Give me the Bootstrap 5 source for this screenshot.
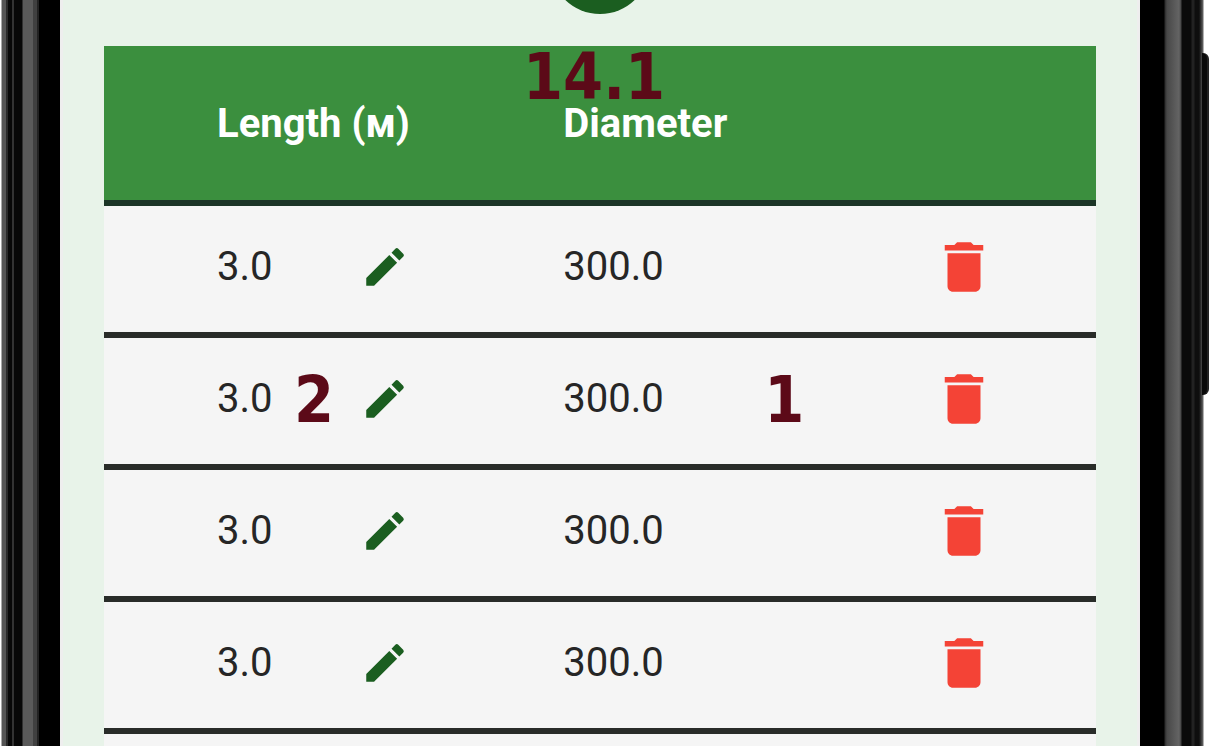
<!DOCTYPE html>
<html lang="en">
<head>
<meta charset="utf-8">
<meta name="viewport" content="width=device-width, initial-scale=1">
<title>Length and diameter</title>
<link href="https://cdn.jsdelivr.net/npm/bootstrap@5.3.0/dist/css/bootstrap.min.css" rel="stylesheet">
<style>
  body { font-family: Roboto, sans-serif; background: #fff; }
  /* phone frame */
  .bezel-left {
    width: 60px;
    background: linear-gradient(90deg, #fff 1px, #aaa 1px 2px, #555 2px 6px, #2a2a2a 6px 8px, #080808 8px 12px, #333 12px 14px, #080808 14px 22px, #5a5a5a 23px 33px, #404040 33px 37px, #222 37px 39px, #000 39px);
  }
  .bezel-right {
    width: 71px;
    background: linear-gradient(90deg, #000 24px, #2c2c2c 25px, #484848 27px, #646464 39px, #444 41px, #0a0a0a 42px 51px, #222 52px 54px, #0e0e0e 55px 59px, #333 61px, #666 63px, #fff 64px);
  }
  .power-key { top: 53px; right: 2px; width: 7px; height: 342px; background: #0a0a0a; border-right: 2px solid #222; border-radius: 0 6px 6px 0; }
  .screen { background: #e8f3e9; border: solid #eee; border-width: 0 3px; padding: 0 41px; }
  .topbar { height: 46px; padding-bottom: 32px; }
  .fab { width: 100px; height: 100px; background: #1b5e20; border: 0; }
  /* measurements table */
  .sheet { background: #f5f5f5; }
  .measures { table-layout: fixed; border-collapse: separate; border-spacing: 0; font-size: 40px; line-height: 46px; color: #262626; }
  .measures th, .measures td { padding: 0 0 4px; border-bottom: 6px solid #292c29; vertical-align: middle; }
  .measures th { height: 160px; padding: 2px 0 0; background: #3b8f3e; color: #fff; border-color: #1c3527; font-weight: 700; }
  .measures td { height: 132px; }
  .col-length { width: 46.3%; }
  .col-diameter { width: 27.1%; }
  .measures .first { padding-left: 113px; }
  .amount { width: 143px; }
  .tool { background: none; border: 0; padding: 0; line-height: 0; }
  .edit { color: #1b5e20; }
  .delete { color: #f44336; }
  /* numbered callouts over the table */
  .callout { font: 700 64px/64px "DejaVu Sans Condensed", "DejaVu Sans", sans-serif; color: #5c0a18; }
  .callout-title { top: -1px; left: 419px; }
  .callout-edit { top: -6px; left: 77px; }
  .callout-cell { top: -8px; left: 201px; }
</style>
</head>
<body>
<svg class="d-none" aria-hidden="true">
  <symbol id="pencil" viewBox="0 0 24 24"><path fill="currentColor" d="M3 17.25V21h3.75L17.81 9.94l-3.75-3.75L3 17.25zM20.71 7.04a1 1 0 0 0 0-1.41l-2.34-2.34a1 1 0 0 0-1.41 0l-1.83 1.83 3.75 3.75 1.83-1.83z"/></symbol>
  <symbol id="bin" viewBox="0 0 24 24"><path fill="currentColor" d="M6 19c0 1.100.9 2 2 2h8c1.100 0 2-.9 2-2V7H6v12zM19 4h-3.500l-1-1h-5l-1 1H5v2h14V4z"/></symbol>
</svg>
<div class="d-flex vh-100 overflow-hidden position-relative">
  <div class="bezel-left flex-shrink-0"></div>
  <main class="screen flex-grow-1 d-flex flex-column">
    <div class="topbar d-flex justify-content-center align-items-end flex-shrink-0">
      <button type="button" class="fab rounded-circle flex-shrink-0" aria-label="Add"></button>
    </div>
    <div class="sheet flex-grow-1 position-relative">
      <table class="measures w-100">
        <thead>
          <tr><th class="col-length first" scope="col">Length (м)</th><th class="col-diameter" scope="col">Diameter</th><th></th></tr>
        </thead>
        <tbody>
          <tr>
            <td class="first"><div class="d-flex align-items-center"><span class="amount">3.0</span><button type="button" class="tool edit" aria-label="Edit"><svg width="50" height="50"><use href="#pencil"/></svg></button></div></td>
            <td>300.0</td>
            <td class="text-center"><button type="button" class="tool delete" aria-label="Delete"><svg width="66" height="66"><use href="#bin"/></svg></button></td>
          </tr>
          <tr>
            <td class="first"><div class="d-flex align-items-center position-relative"><span class="amount">3.0</span><button type="button" class="tool edit" aria-label="Edit"><svg width="50" height="50"><use href="#pencil"/></svg></button><span class="callout callout-edit position-absolute">2</span></div></td>
            <td><div class="position-relative">300.0<span class="callout callout-cell position-absolute">1</span></div></td>
            <td class="text-center"><button type="button" class="tool delete" aria-label="Delete"><svg width="66" height="66"><use href="#bin"/></svg></button></td>
          </tr>
          <tr>
            <td class="first"><div class="d-flex align-items-center"><span class="amount">3.0</span><button type="button" class="tool edit" aria-label="Edit"><svg width="50" height="50"><use href="#pencil"/></svg></button></div></td>
            <td>300.0</td>
            <td class="text-center"><button type="button" class="tool delete" aria-label="Delete"><svg width="66" height="66"><use href="#bin"/></svg></button></td>
          </tr>
          <tr>
            <td class="first"><div class="d-flex align-items-center"><span class="amount">3.0</span><button type="button" class="tool edit" aria-label="Edit"><svg width="50" height="50"><use href="#pencil"/></svg></button></div></td>
            <td>300.0</td>
            <td class="text-center"><button type="button" class="tool delete" aria-label="Delete"><svg width="66" height="66"><use href="#bin"/></svg></button></td>
          </tr>
        </tbody>
      </table>
      <span class="callout callout-title position-absolute">14.1</span>
    </div>
  </main>
  <div class="bezel-right flex-shrink-0"></div>
  <div class="power-key position-absolute"></div>
</div>
<script src="https://cdn.jsdelivr.net/npm/bootstrap@5.3.0/dist/js/bootstrap.bundle.min.js"></script>
</body>
</html>
